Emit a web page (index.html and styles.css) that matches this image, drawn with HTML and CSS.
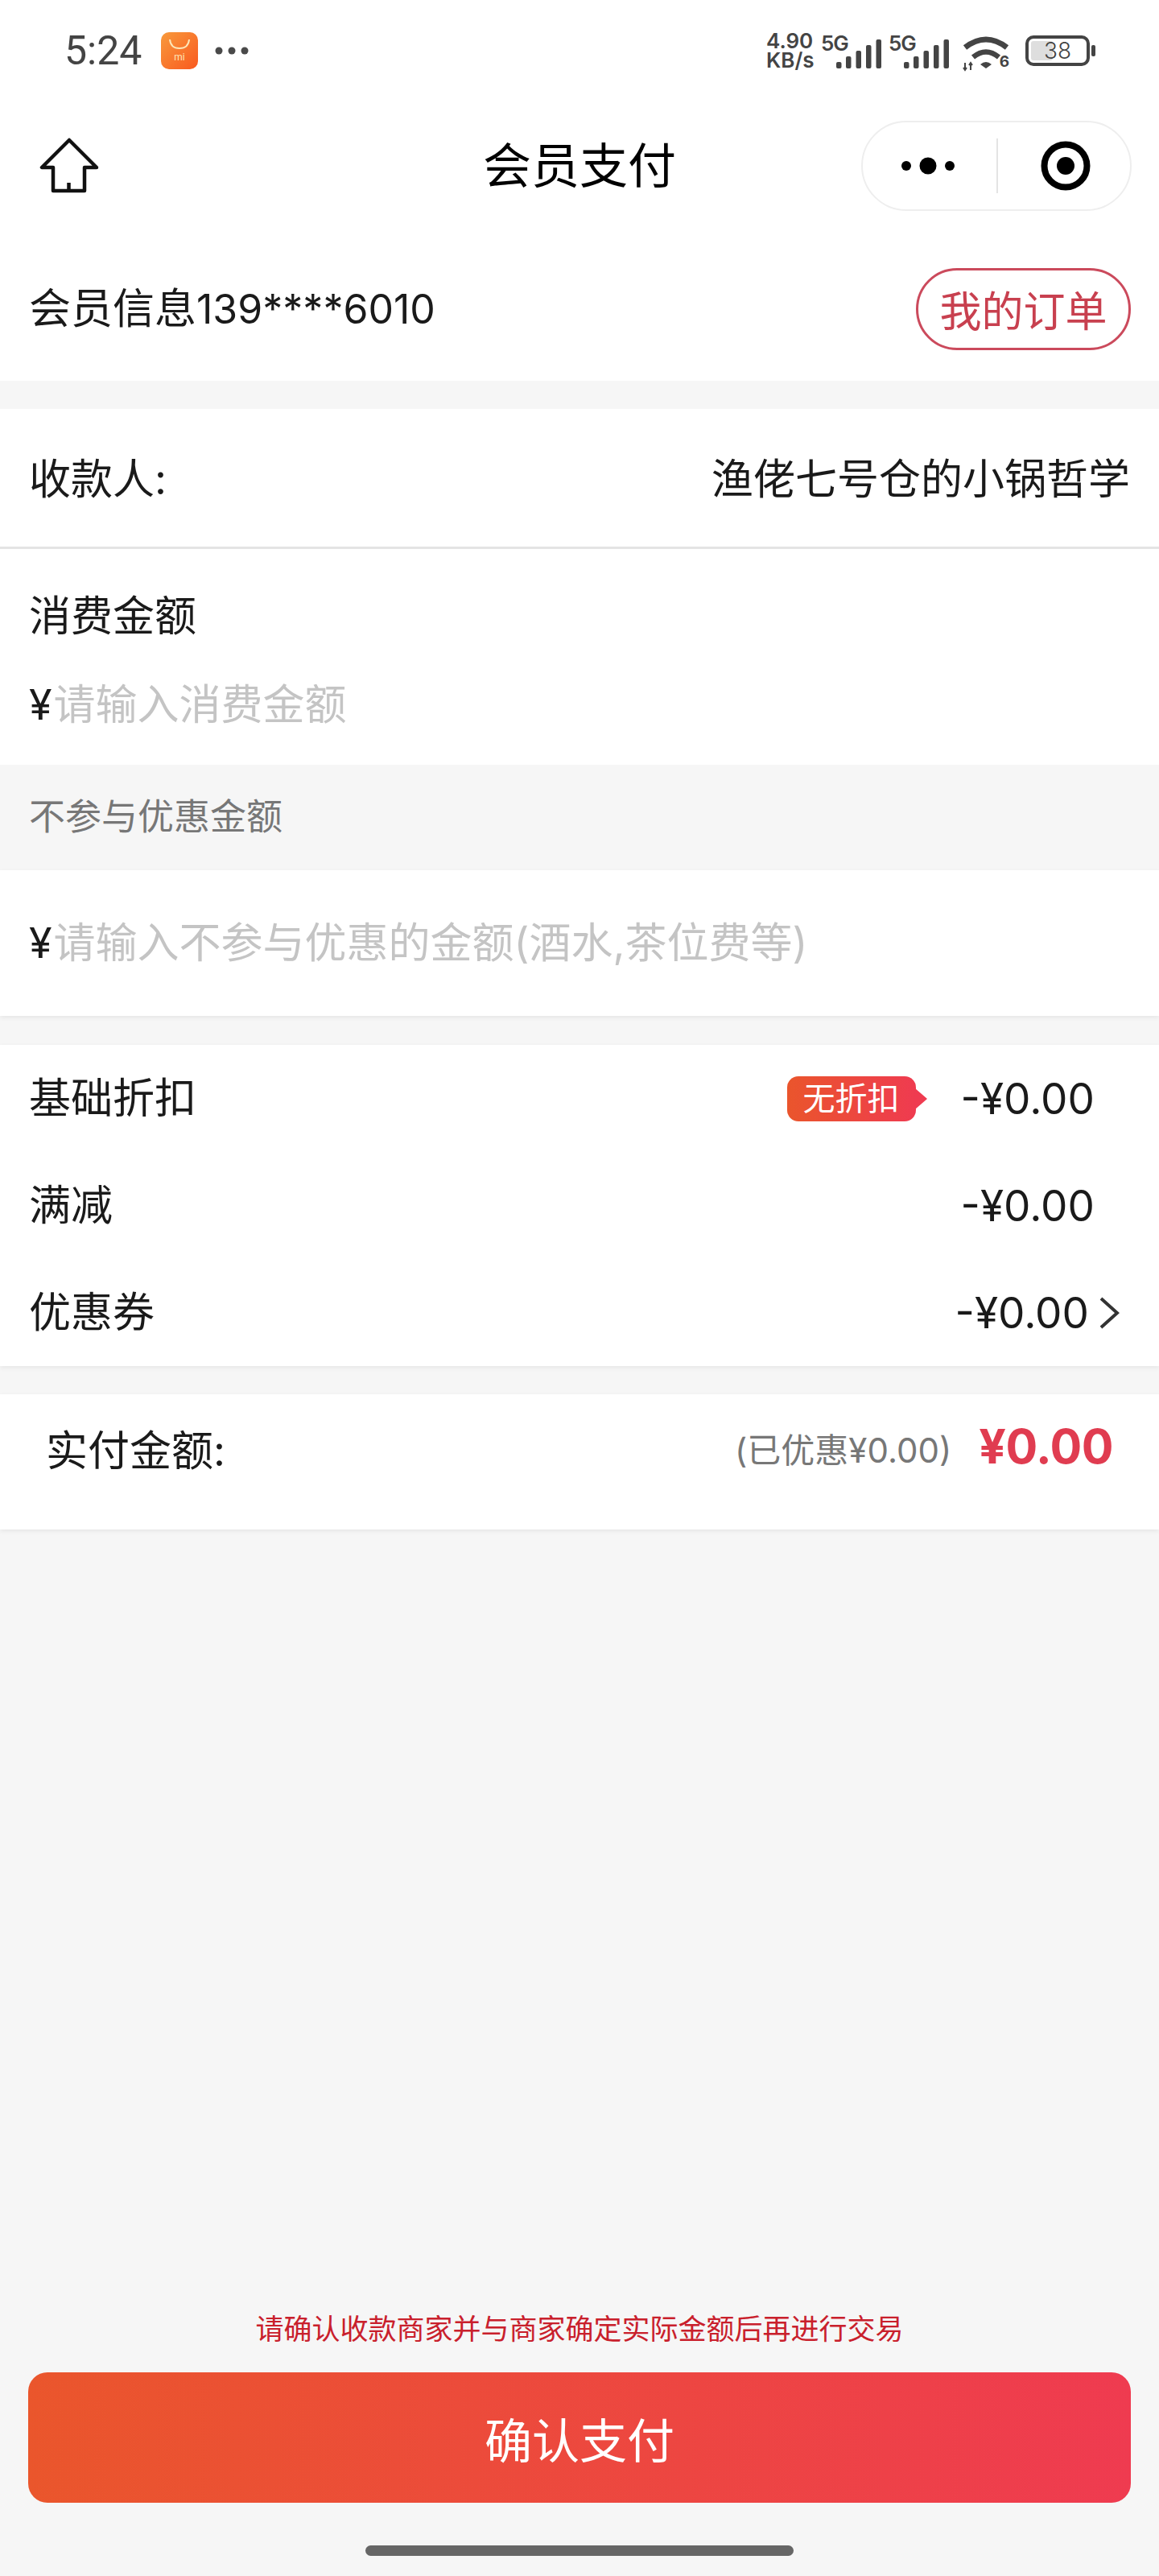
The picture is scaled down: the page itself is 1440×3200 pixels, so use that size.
FILE: index.html
```html
<!DOCTYPE html>
<html lang="zh-CN">
<head>
  <meta charset="UTF-8">
  <title>会员支付</title>
  <link rel="stylesheet" href="styles.css">
</head>
<body>
<div class="page">

  <div class="status-bar">
    <div class="status-left">
      <span class="time">5:24</span>
      <svg class="app-icon" width="46" height="46" viewBox="0 0 46 46">
        <defs>
          <linearGradient id="appGrad" x1="0" y1="0" x2="1" y2="1">
            <stop offset="0" stop-color="#f89a3c"/>
            <stop offset="1" stop-color="#f9591f"/>
          </linearGradient>
        </defs>
        <rect width="46" height="46" rx="10" fill="url(#appGrad)"/>
        <path d="M11 9q1 11 12 11t12-11" fill="none" stroke="#fde7b8" stroke-width="2"/>
        <text x="23" y="35" text-anchor="middle" class="app-mi">mi</text>
      </svg>
      <svg width="42" height="10" viewBox="0 0 42 10" fill="#4a4a4a">
        <circle cx="5" cy="5" r="4.5"/><circle cx="21" cy="5" r="4.5"/><circle cx="37" cy="5" r="4.5"/>
      </svg>
    </div>
    <div class="status-right">
      <div class="speed">4.90<br>KB/s</div>
      <div class="sim">
        <span class="sim-type">5G</span>
        <svg class="sim-bars" width="56" height="36" viewBox="0 0 56 36" fill="#444">
          <rect x="0" y="28" width="6.5" height="8" rx="2"/>
          <rect x="12" y="21" width="6.5" height="15" rx="2"/>
          <rect x="24.500" y="14" width="6.5" height="22" rx="2"/>
          <rect x="37" y="7" width="6.5" height="29" rx="2"/>
          <rect x="49.500" y="0" width="6.5" height="36" rx="2"/>
        </svg>
      </div>
      <div class="sim">
        <span class="sim-type">5G</span>
        <svg class="sim-bars" width="56" height="36" viewBox="0 0 56 36" fill="#444">
          <rect x="0" y="28" width="6.5" height="8" rx="2"/>
          <rect x="12" y="21" width="6.5" height="15" rx="2"/>
          <rect x="24.500" y="14" width="6.5" height="22" rx="2"/>
          <rect x="37" y="7" width="6.5" height="29" rx="2"/>
          <rect x="49.500" y="0" width="6.5" height="36" rx="2"/>
        </svg>
      </div>
      <div class="wifi">
        <svg width="58" height="45" viewBox="0 0 58 45">
          <path d="M3 14Q29 -6 55 14" fill="none" stroke="#444" stroke-width="7"/>
          <path d="M13 26Q29 13 45 26" fill="none" stroke="#444" stroke-width="6.500"/>
          <path d="M29 40l-7-5q7-6 14 0z" fill="#444"/>
          <path d="M3 33v9M1 39l2 3 2-3M10 42v-9M8 36l2-3 2 3" fill="none" stroke="#444" stroke-width="2"/>
        </svg>
        <span class="wifi-six">6</span>
      </div>
      <div class="battery">
        <div class="battery-body">
          <span class="battery-fill"></span>
          <span class="battery-num">38</span>
        </div>
        <span class="battery-nub"></span>
      </div>
    </div>
  </div>

  <div class="nav">
    <svg class="home-icon" width="74" height="70" viewBox="0 0 74 70">
      <path d="M37 3L3 37H17V66H56V37H71Z M36.500 66V56" fill="none" stroke="#111" stroke-width="4.500" stroke-linejoin="round"/>
    </svg>
    <div class="nav-title">会员支付</div>
    <div class="capsule">
      <div class="capsule-part dots-part">
        <svg width="66" height="22" viewBox="0 0 66 22" fill="#000">
          <circle cx="6" cy="11" r="6"/><circle cx="33" cy="11" r="10.500"/><circle cx="60" cy="11" r="6"/>
        </svg>
      </div>
      <span class="capsule-line"></span>
      <div class="capsule-part target-part">
        <svg class="target" width="62" height="62" viewBox="0 0 62 62">
          <circle cx="31" cy="31" r="26.500" fill="none" stroke="#000" stroke-width="8"/>
          <circle cx="31" cy="31" r="11" fill="#000"/>
        </svg>
      </div>
    </div>
  </div>

  <div class="member">
    <span class="lift">会员信息<span class="phone">139****6010</span></span>
    <span class="order-btn">我的订单</span>
  </div>

  <div class="payee">
    <span>收款人:</span>
    <span>渔佬七号仓的小锅哲学</span>
  </div>

  <div class="amount">
    <div class="amount-label">消费金额</div>
    <div class="amount-input"><span>¥</span><span class="placeholder">请输入消费金额</span></div>
  </div>

  <div class="extra-title">不参与优惠金额</div>

  <div class="extra card">
    <div class="amount-input"><span>¥</span><span class="placeholder">请输入不参与优惠的金额(酒水,茶位费等)</span></div>
  </div>

  <div class="discounts card">
    <div class="discount-row">
      <span class="lift">基础折扣</span>
      <span class="discount-right">
        <span class="tag">无折扣</span>
        <span class="price">-¥0.00</span>
      </span>
    </div>
    <div class="discount-row">
      <span class="lift">满减</span>
      <span class="price">-¥0.00</span>
    </div>
    <div class="discount-row coupon">
      <span class="lift">优惠券</span>
      <span class="discount-right">
        <span class="price">-¥0.00</span>
        <svg class="chevron" width="26" height="42" viewBox="0 0 26 42">
          <path d="M3 3L23 21L3 39" fill="none" stroke="#333" stroke-width="4"/>
        </svg>
      </span>
    </div>
  </div>

  <div class="total card">
    <span>实付金额:</span>
    <span class="total-right">
      <span class="saved">(已优惠¥0.00)</span>
      <span class="total-price">¥0.00</span>
    </span>
  </div>

  <div class="footer">
    <div class="warning">请确认收款商家并与商家确定实际金额后再进行交易</div>
    <div class="pay-btn">确认支付</div>
    <div class="home-bar"></div>
  </div>

</div>
</body>
</html>
```

FILE: styles.css
```css
* {
  box-sizing: border-box;
}
body {
  margin: 0;
  font-family: "Inter", "Noto Sans CJK SC", sans-serif;
  color: #1a1a1a;
  background-color: #f6f6f6;
}
.page {
  width: 1440px;
  height: 3200px;
  display: flex;
  flex-direction: column;
  font-size: 52px;
}
.card {
  background: #fff;
  box-shadow: 0 2px 6px rgba(0,0,0,0.07);
}
.lift {
  margin-top: -8px;
}

/* status bar */
.status-bar {
  height: 125px;
  background: #fff;
  padding: 0 79px 0 80px;
  display: flex;
  align-items: center;
  justify-content: space-between;
  color: #444;
}
.status-left {
  display: flex;
  align-items: center;
}
.time {
  font-family: "Roboto", sans-serif;
  font-size: 50px;
  width: 120px;
}
.app-icon {
  margin-right: 21px;
}
.app-mi {
  font-family: "Roboto", sans-serif;
  font-size: 12px;
  fill: #fde7b8;
}
.status-right {
  display: flex;
  align-items: center;
}
.speed {
  width: 68px;
  font-size: 26px;
  font-weight: 600;
  line-height: 24px;
}
.sim {
  width: 84px;
  height: 44px;
  display: flex;
  align-items: flex-end;
}
.sim-type {
  align-self: flex-start;
  font-size: 26px;
  font-weight: 600;
  line-height: 26px;
  letter-spacing: -1px;
}
.sim-bars {
  margin-left: -15px;
}
.wifi {
  position: relative;
  height: 45px;
  margin-left: 8px;
}
.wifi-six {
  position: absolute;
  right: 0;
  bottom: -3px;
  font-size: 19px;
  line-height: 22px;
  font-weight: 700;
}
.battery {
  margin-left: 20px;
  display: flex;
  align-items: center;
}
.battery-body {
  position: relative;
  width: 80px;
  height: 38px;
  border: 4px solid #444;
  border-radius: 10px;
  display: flex;
  align-items: center;
  justify-content: center;
}
.battery-fill {
  position: absolute;
  left: 3px;
  top: 3px;
  bottom: 3px;
  width: 27px;
  background: #dedede;
  border-radius: 3px;
}
.battery-num {
  position: relative;
  font-size: 28px;
  font-weight: 300;
  line-height: 30px;
}
.battery-nub {
  width: 5px;
  height: 14px;
  margin-left: 2px;
  background: #444;
  border-radius: 2px;
}

/* title bar */
.nav {
  height: 161px;
  background: #fff;
  padding: 0 34px;
  display: grid;
  grid-template-columns: 1fr auto 1fr;
  align-items: center;
}
.home-icon {
  margin-left: 15px;
}
.nav-title {
  margin-top: -8px;
  font-size: 60px;
  color: #000;
}
.capsule {
  justify-self: end;
  width: 336px;
  height: 112px;
  border: 2px solid #eee;
  border-radius: 56px;
  display: flex;
  align-items: center;
}
.capsule-part {
  display: flex;
  justify-content: center;
}
.dots-part {
  width: 166px;
  padding-right: 4px;
}
.target-part {
  width: 164px;
  padding-left: 4px;
}
.capsule-line {
  width: 2px;
  height: 68px;
  background: #e4e4e4;
}

/* member */
.member {
  height: 187px;
  padding: 8px 35px 0 36px;
  background: #fff;
  display: flex;
  align-items: center;
  justify-content: space-between;
}
.phone {
  font-size: 50px;
}
.order-btn {
  width: 267px;
  height: 102px;
  border: 3px solid #cb4a5c;
  border-radius: 51px;
  color: #c8404f;
  display: flex;
  align-items: center;
  justify-content: center;
}

/* payee and amount inputs */
.payee {
  height: 174px;
  margin-top: 35px;
  padding: 0 36px 4px;
  background: #fff;
  border-bottom: 3px solid #e4e4e4;
  display: flex;
  align-items: center;
  justify-content: space-between;
}
.amount {
  height: 268px;
  padding: 49px 36px 0;
  background: #fff;
}
.amount-label {
  line-height: 70px;
}
.amount-input {
  display: flex;
  align-items: center;
  line-height: 70px;
  margin-top: 40px;
}
.placeholder {
  margin-left: 2px;
  color: #c4c4c4;
}
.extra-title {
  height: 131px;
  padding: 0 36px 8px;
  display: flex;
  align-items: center;
  font-size: 45px;
  color: #777;
}
.extra {
  height: 181px;
  padding: 0 36px;
  display: flex;
  align-items: center;
}
.extra .amount-input {
  margin-top: 0;
}

/* discounts */
.discounts {
  height: 399px;
  margin-top: 36px;
  padding: 0 36px;
}
.discount-row {
  height: 133px;
  display: flex;
  align-items: center;
  justify-content: space-between;
  padding-right: 44px;
}
.coupon {
  padding-right: 13px;
}
.discount-right {
  display: flex;
  align-items: center;
}
.price {
  font-size: 53px;
}
.tag {
  position: relative;
  width: 160px;
  height: 56px;
  margin-right: 56px;
  border-radius: 14px;
  background: linear-gradient(90deg, #ea552c, #ef3b50);
  color: #fff;
  font-size: 40px;
  line-height: 56px;
  text-align: center;
}
.tag::after {
  content: "";
  position: absolute;
  right: -14px;
  top: 15px;
  border-left: 15px solid #ef3b50;
  border-top: 13px solid transparent;
  border-bottom: 13px solid transparent;
}
.chevron {
  margin-left: 12px;
}

/* total */
.total {
  height: 168px;
  margin-top: 35px;
  padding: 0 57px 36px;
  display: flex;
  align-items: center;
  justify-content: space-between;
}
.total-right {
  display: flex;
  align-items: center;
}
.saved {
  font-size: 42px;
  color: #777;
}
.total-price {
  margin-left: 34px;
  margin-top: -4px;
  font-size: 59px;
  font-weight: 700;
  letter-spacing: -0.5px;
  color: #e03c50;
}

/* footer */
.footer {
  margin-top: auto;
  padding: 0 35px 25px;
  display: flex;
  flex-direction: column;
  align-items: center;
}
.warning {
  font-size: 35px;
  color: #c9202c;
  line-height: 50px;
}
.pay-btn {
  width: 100%;
  height: 162px;
  margin-top: 29px;
  border-radius: 24px;
  background: linear-gradient(90deg, #ea562c, #ef3b50);
  color: #fff;
  font-size: 59px;
  display: flex;
  align-items: center;
  justify-content: center;
}
.home-bar {
  width: 532px;
  height: 13px;
  margin-top: 53px;
  border-radius: 7px;
  background: #666;
}
```
